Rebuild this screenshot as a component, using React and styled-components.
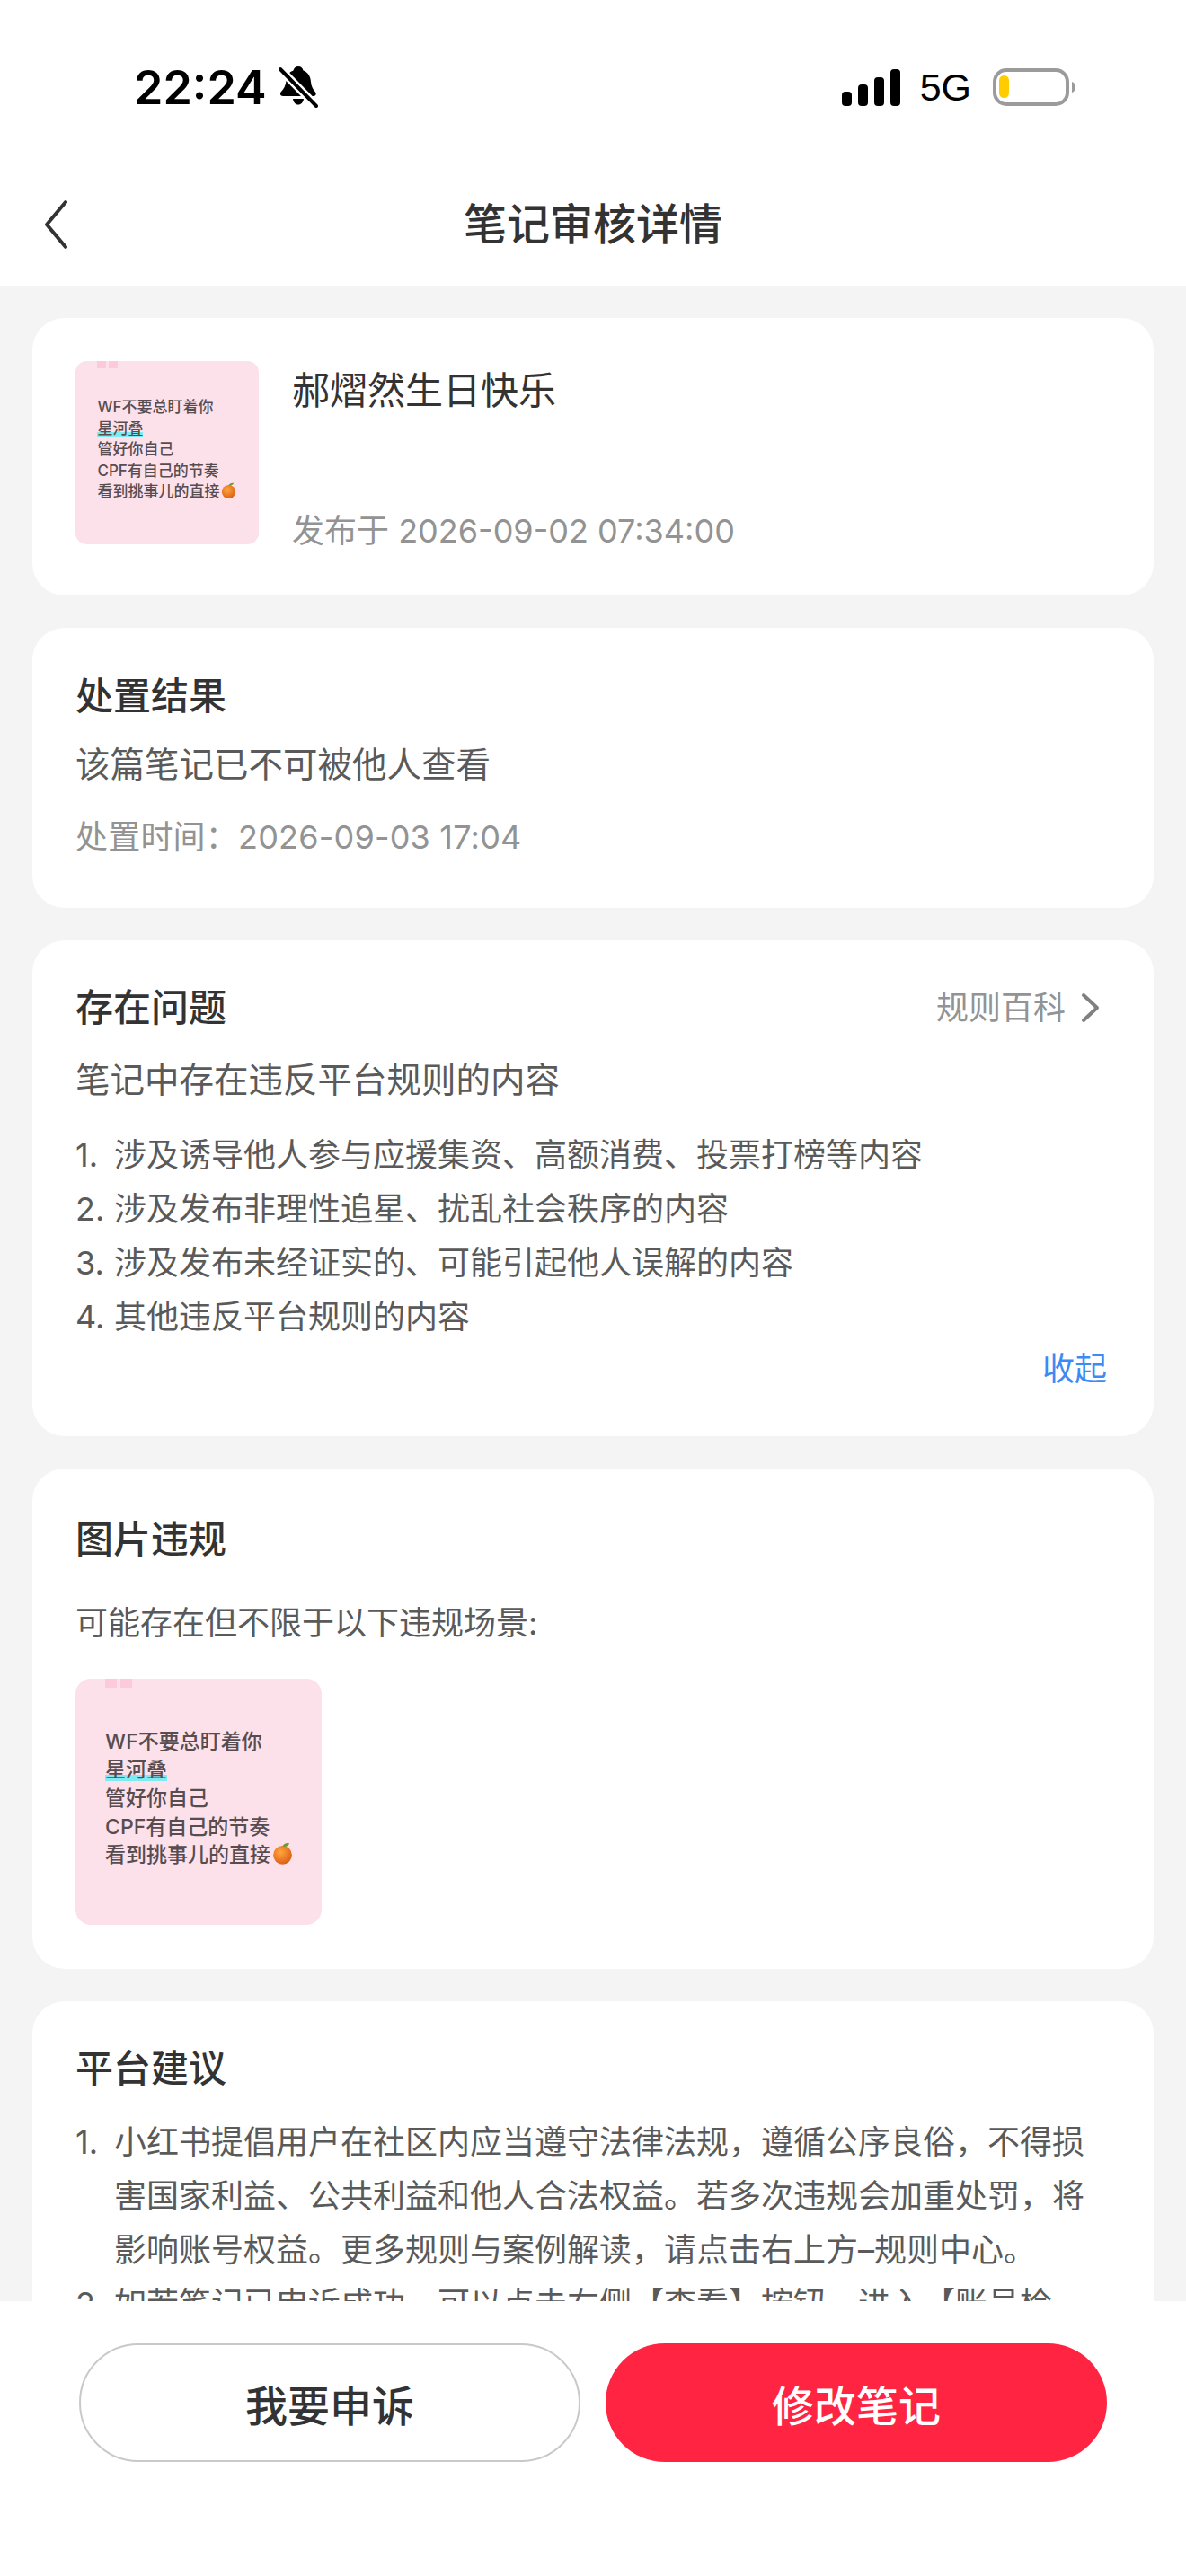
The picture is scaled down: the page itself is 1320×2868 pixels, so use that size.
import React from "react";
import styled, { createGlobalStyle } from "styled-components";

const colorTitle = "#333333";
const colorBody = "#5a5a5a";
const colorMuted = "#939393";

const GlobalStyle = createGlobalStyle`
  * {
    box-sizing: border-box;
  }
  body {
    margin: 0;
    background: #ffffff;
    font-family: "Inter", "Noto Sans CJK SC", sans-serif;
  }
`;

const Screen = styled.div`
  width: 1320px;
  height: 2868px;
  display: flex;
  flex-direction: column;
  overflow: hidden;
  background: #ffffff;
`;

const StatusBar = styled.div`
  flex: none;
  height: 182px;
  padding: 12px 123px 0 149px;
  display: flex;
  align-items: center;
  justify-content: space-between;
`;

const StatusGroup = styled.div`
  display: flex;
  align-items: center;
`;

const Clock = styled.span`
  font-family: "Inter", sans-serif;
  font-size: 52px;
  font-weight: 600;
  color: #000000;
  margin-right: 13px;
`;

const Network = styled.span`
  font-family: "Liberation Sans", sans-serif;
  font-size: 43px;
  color: #000000;
  margin: 0 24px 0 22px;
`;

const NavBar = styled.header`
  flex: none;
  height: 136px;
  padding: 0 48px;
  display: grid;
  grid-template-columns: 1fr auto 1fr;
  align-items: center;
`;

const NavTitle = styled.h1`
  margin: 0;
  font-size: 48px;
  line-height: 60px;
  font-weight: 500;
  color: ${colorTitle};
`;

const Content = styled.main`
  flex: 1;
  min-height: 0;
  overflow: hidden;
  padding: 36px 36px 0;
  display: flex;
  flex-direction: column;
  gap: 36px;
  background: #f4f4f4;
`;

const Card = styled.section`
  flex: none;
  padding: ${(p) => p.$top}px 48px ${(p) => p.$bottom}px;
  border-radius: 36px;
  background: #ffffff;
`;

const NoteRow = styled.div`
  display: flex;
  gap: 37px;
`;

const NoteText = styled.div`
  padding-top: 2px;
`;

const NoteName = styled.div`
  font-size: 42px;
  line-height: 62px;
  color: ${colorTitle};
`;

const NoteDate = styled.div`
  margin-top: 100px;
  font-size: 36px;
  line-height: 50px;
  color: ${colorMuted};
`;

const CardHead = styled.div`
  display: flex;
  align-items: center;
  justify-content: space-between;
`;

const CardTitle = styled.h2`
  margin: 0;
  font-size: 42px;
  line-height: 52px;
  font-weight: 500;
  color: ${colorTitle};
`;

const RuleLink = styled.span`
  display: flex;
  align-items: center;
  gap: 17px;
  margin-right: 11px;
  font-size: 36px;
  line-height: 52px;
  color: ${colorMuted};
`;

const Lead = styled.p`
  margin: ${(p) => p.$top}px 0 0;
  font-size: 38.5px;
  line-height: 52px;
  color: ${colorBody};
`;

const Meta = styled.p`
  margin: 30px 0 0;
  font-size: 36px;
  line-height: 50px;
  letter-spacing: 0.2px;
  color: ${colorMuted};
`;

const Hint = styled.p`
  margin: 41px 0 36px;
  font-size: 36px;
  line-height: 52px;
  color: ${colorBody};
`;

const RuleList = styled.ol`
  margin: ${(p) => p.$top}px 0 0;
  padding: 0;
  list-style: none;
`;

const RuleItem = styled.li`
  display: flex;
  font-size: 36px;
  line-height: 60px;
  color: ${colorBody};
`;

const RuleIndex = styled.span`
  flex: none;
  width: 43px;
`;

const Collapse = styled.div`
  text-align: right;
  padding-right: 4px;
  font-size: 36px;
  line-height: 56px;
  color: #3d8af5;
`;

const Thumb = styled.div`
  width: ${(p) => p.$box}px;
  height: ${(p) => p.$box}px;
  flex: none;
  font-size: ${(p) => p.$text}px;
  border-radius: 0.74em;
  padding-left: 1.44em;
  background: #fce1eb;
  color: #574d51;
  font-weight: 500;
  line-height: 1.38em;
`;

const ThumbMarks = styled.div`
  display: flex;
  gap: 0.16em;
  height: 0.45em;
`;

const ThumbMark = styled.i`
  width: 0.58em;
  background: #fccadb;
`;

const ThumbLines = styled.div`
  padding-top: 1.92em;
  white-space: nowrap;
`;

const Marked = styled.span`
  background: linear-gradient(transparent 72%, #7eeaf2 72%, #7eeaf2 96%, transparent 96%);
`;

const Orange = styled.svg`
  width: 1em;
  height: 1.1em;
  margin-left: 0.08em;
  vertical-align: -0.14em;
`;

const ActionBar = styled.footer`
  flex: none;
  height: 306px;
  padding: 47px 88px 0;
  display: grid;
  grid-template-columns: 558px 558px;
  justify-content: space-between;
  align-items: start;
  background: #ffffff;
`;

const ActionButton = styled.button`
  height: 132px;
  border-radius: 66px;
  border: ${(p) => (p.$primary ? "none" : "2px solid #c9c9c9")};
  background: ${(p) => (p.$primary ? "#ff2442" : "#ffffff")};
  color: ${(p) => (p.$primary ? "#ffffff" : colorTitle)};
  font-family: "Noto Sans CJK SC", sans-serif;
  font-size: 47px;
  font-weight: 500;
`;

function BellSlash() {
  return (
    <svg width="44" height="46" viewBox="0 0 44 46">
      <path
        d="M22 0c3 0 5 2 5.500 4.500C33 6.500 35.500 11 36 17c.4 5 2 8 5 11.500 1.500 2 .5 4.500-2 4.500H5c-3 0-4-3-2-5 3-3 5-7 5.500-12C9 10 12 6 16.500 4.500 17 2 19 0 22 0zM16 36h12c-.5 4-3 6.500-6 6.500S16.500 40 16 36z"
        fill="#000"
      />
      <path d="M2 3l40 41" stroke="#fff" strokeWidth="9" />
      <path d="M2 3l40 41" stroke="#000" strokeWidth="4" strokeLinecap="round" />
    </svg>
  );
}

function Signal() {
  return (
    <svg width="65" height="41" viewBox="0 0 65 41">
      <rect x="0" y="25" width="11" height="16" rx="4" fill="#000" />
      <rect x="18" y="17" width="11" height="24" rx="4" fill="#000" />
      <rect x="36" y="9" width="11" height="32" rx="4" fill="#000" />
      <rect x="54" y="0" width="11" height="41" rx="4" fill="#000" />
    </svg>
  );
}

function Battery() {
  return (
    <svg width="92" height="42" viewBox="0 0 92 42">
      <rect x="2" y="2" width="81" height="38" rx="13" fill="#fff" stroke="#9b9b9b" strokeWidth="4" />
      <rect x="7" y="8" width="11" height="25" rx="5.500" fill="#ffcc00" />
      <path d="M88 15c2.500.8 4 3 4 6s-1.500 5.200-4 6z" fill="#9b9b9b" />
    </svg>
  );
}

function BackArrow() {
  return (
    <svg width="28" height="56" viewBox="0 0 28 56">
      <path d="M25 3L4 28l21 25" fill="none" stroke={colorTitle} strokeWidth="4" strokeLinecap="round" strokeLinejoin="round" />
    </svg>
  );
}

function Chevron() {
  return (
    <svg width="22" height="34" viewBox="0 0 22 34">
      <path d="M3 3l15 14L3 31" fill="none" stroke="#808080" strokeWidth="4" strokeLinecap="round" strokeLinejoin="round" />
    </svg>
  );
}

function OrangeEmoji() {
  return (
    <Orange viewBox="0 0 20 22">
      <defs>
        <radialGradient id="orangeSkin" cx="0.4" cy="0.35" r="0.75">
          <stop offset="0" stopColor="#ffa63d" />
          <stop offset="1" stopColor="#d8560f" />
        </radialGradient>
      </defs>
      <circle cx="10" cy="12.500" r="9" fill="url(#orangeSkin)" />
      <path d="M10 4c1-2.500 3.500-3.500 6.500-3-.5 2.500-3.500 4-6.500 3z" fill="#6c9a2c" />
    </Orange>
  );
}

function NoteThumb({ box, text }) {
  return (
    <Thumb $box={box} $text={text}>
      <ThumbMarks>
        <ThumbMark />
        <ThumbMark />
      </ThumbMarks>
      <ThumbLines>
        WF不要总盯着你
        <br />
        <Marked>星河叠</Marked>
        <br />
        管好你自己
        <br />
        CPF有自己的节奏
        <br />
        看到挑事儿的直接
        <OrangeEmoji />
      </ThumbLines>
    </Thumb>
  );
}

const problems = [
  "涉及诱导他人参与应援集资、高额消费、投票打榜等内容",
  "涉及发布非理性追星、扰乱社会秩序的内容",
  "涉及发布未经证实的、可能引起他人误解的内容",
  "其他违反平台规则的内容",
];

const advice = [
  "小红书提倡用户在社区内应当遵守法律法规，遵循公序良俗，不得损害国家利益、公共利益和他人合法权益。若多次违规会加重处罚，将影响账号权益。更多规则与案例解读，请点击右上方–规则中心。",
  "如若笔记已申诉成功，可以点击右侧【查看】按钮，进入【账号检",
];

function Rules({ items, top }) {
  return (
    <RuleList $top={top}>
      {items.map((text, i) => (
        <RuleItem key={text}>
          <RuleIndex>{i + 1}.</RuleIndex>
          <span>{text}</span>
        </RuleItem>
      ))}
    </RuleList>
  );
}

export default function App() {
  return (
    <Screen>
      <GlobalStyle />
      <StatusBar>
        <StatusGroup>
          <Clock>22:24</Clock>
          <BellSlash />
        </StatusGroup>
        <StatusGroup>
          <Signal />
          <Network>5G</Network>
          <Battery />
        </StatusGroup>
      </StatusBar>
      <NavBar>
        <BackArrow />
        <NavTitle>笔记审核详情</NavTitle>
      </NavBar>
      <Content>
        <Card $top={48} $bottom={47}>
          <NoteRow>
            <NoteThumb box={204} text={17} />
            <NoteText>
              <NoteName>郝熠然生日快乐</NoteName>
              <NoteDate>发布于 2026-09-02 07:34:00</NoteDate>
            </NoteText>
          </NoteRow>
        </Card>
        <Card $top={50} $bottom={54}>
          <CardTitle>处置结果</CardTitle>
          <Lead $top={24}>该篇笔记已不可被他人查看</Lead>
          <Meta>处置时间：2026-09-03 17:04</Meta>
        </Card>
        <Card $top={49} $bottom={47}>
          <CardHead>
            <CardTitle>存在问题</CardTitle>
            <RuleLink>
              规则百科
              <Chevron />
            </RuleLink>
          </CardHead>
          <Lead $top={28}>笔记中存在违反平台规则的内容</Lead>
          <Rules items={problems} top={28} />
          <Collapse>收起</Collapse>
        </Card>
        <Card $top={53} $bottom={49}>
          <CardTitle>图片违规</CardTitle>
          <Hint>可能存在但不限于以下违规场景:</Hint>
          <NoteThumb box={274} text={23} />
        </Card>
        <Card $top={49} $bottom={48}>
          <CardTitle>平台建议</CardTitle>
          <Rules items={advice} top={26} />
        </Card>
      </Content>
      <ActionBar>
        <ActionButton>我要申诉</ActionButton>
        <ActionButton $primary>修改笔记</ActionButton>
      </ActionBar>
    </Screen>
  );
}
